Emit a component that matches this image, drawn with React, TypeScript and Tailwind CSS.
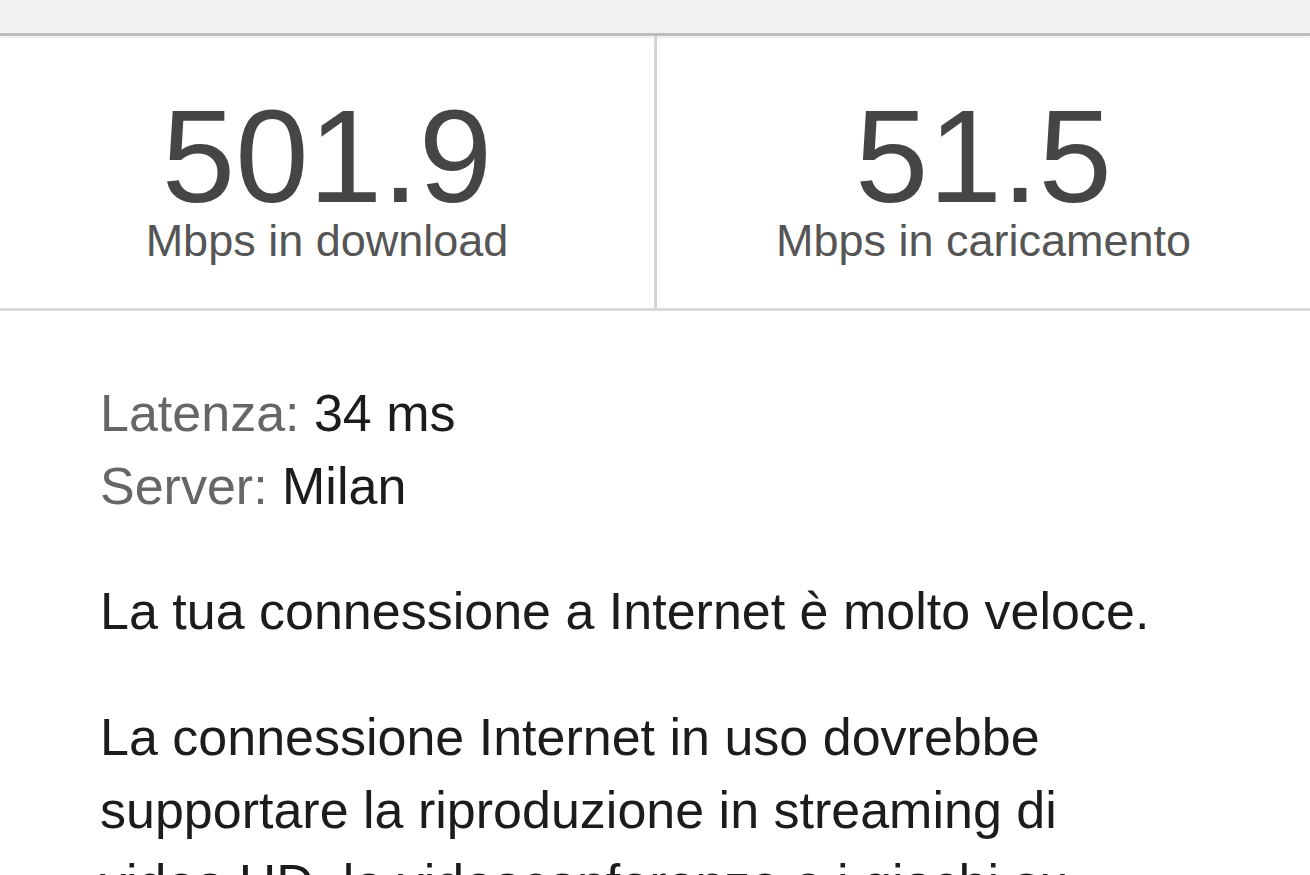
import React from "react";

export default function App() {
  const font = { fontFamily: '"Liberation Sans", Arial, Helvetica, sans-serif' };
  return (
    <div className="w-[1310px] h-[875px] overflow-hidden bg-white" style={font}>
      <div className="h-[36px] bg-[#f1f2f4] border-b-[3px] border-[#bdbdbd] shadow-[0_2px_3px_rgba(0,0,0,0.08)]" />
      <div className="grid grid-cols-[654px_3px_1fr] h-[275px] border-b-[3px] border-[#d9d9d9]">
        <div className="flex flex-col items-center pt-[61px]">
          <div className="text-[132px] leading-[120px] text-[#454545]">501.9</div>
          <div className="text-[45px] leading-[45px] mt-[1px] text-[#555555]">Mbps in download</div>
        </div>
        <div className="bg-[#d4d4d4]" />
        <div className="flex flex-col items-center pt-[61px]">
          <div className="text-[132px] leading-[120px] text-[#454545]">51.5</div>
          <div className="text-[45px] leading-[45px] mt-[1px] text-[#555555]">Mbps in caricamento</div>
        </div>
      </div>
      <div className="pl-[100px] pr-[40px] pt-[66px] text-[52px] leading-[73px] text-[#1c1c1c]">
        <div>
          <span className="text-[#666666]">Latenza:</span> 34 ms
        </div>
        <div>
          <span className="text-[#666666]">Server:</span> Milan
        </div>
        <p className="mt-[52px]">La tua connessione a Internet è molto veloce.</p>
        <p className="mt-[53px] w-[1000px]">
          La connessione Internet in uso dovrebbe supportare la riproduzione in streaming di video HD, le videoconferenze e i giochi su più dispositivi contemporaneamente.
        </p>
      </div>
    </div>
  );
}
